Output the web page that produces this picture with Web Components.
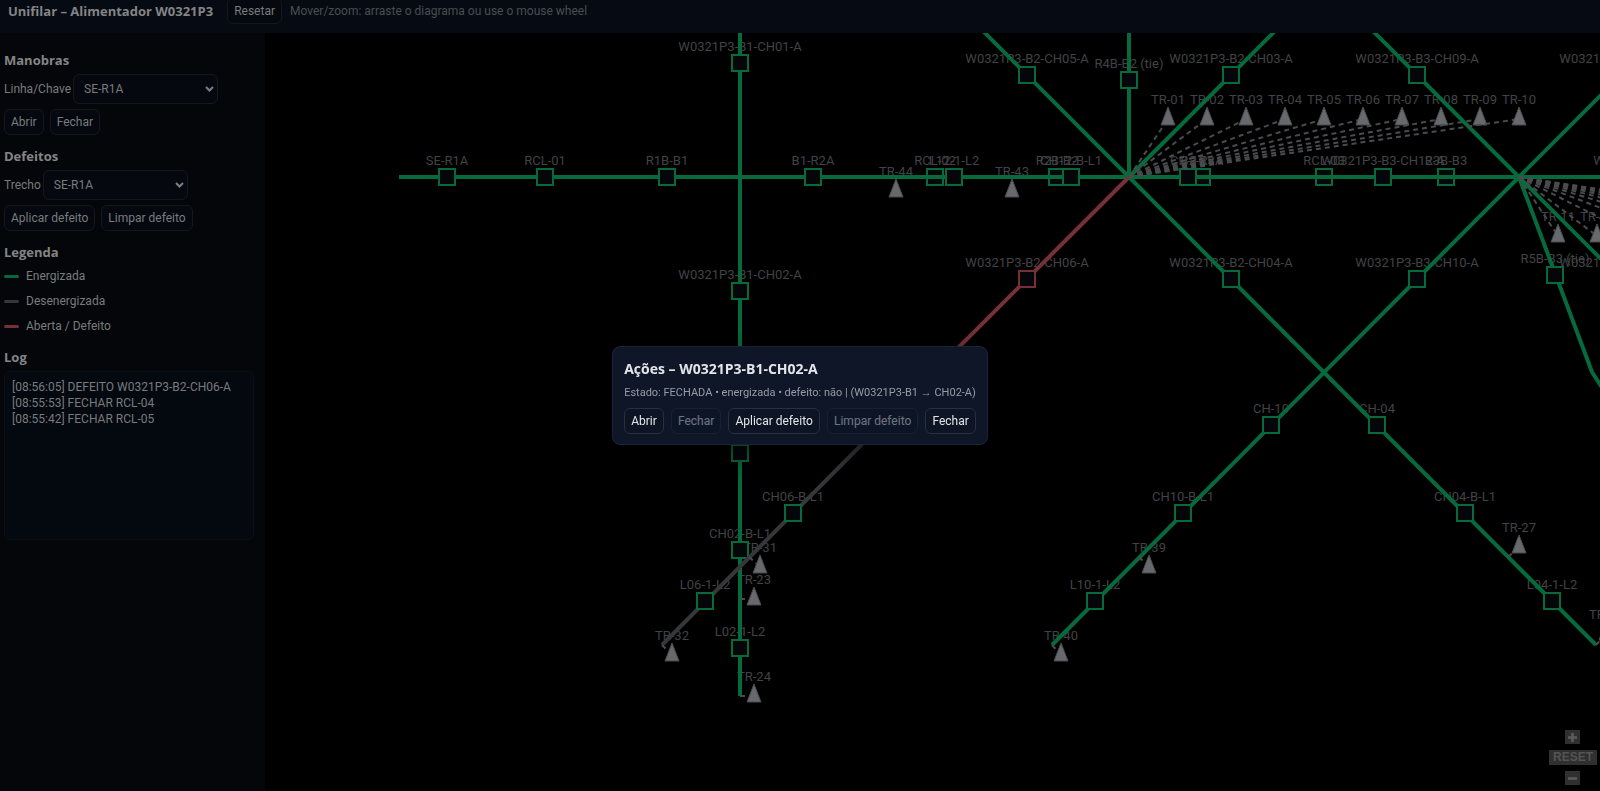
<!DOCTYPE html>
<html lang="pt-BR">
<head>
<meta charset="utf-8">
<title>Unifilar – Alimentador W0321P3</title>
<style>
  html, body { height: 100%; margin: 0; overflow: hidden; background: #000; }
  body { font: 12px/16px Roboto, "Noto Sans", sans-serif; color: #797b7d; }
</style>
</head>
<body>
<unifilar-app></unifilar-app>
<script>
const define = (name, html, setup) => customElements.define(name, class extends HTMLElement {
  constructor() {
    super();
    this.attachShadow({ mode: 'open' }).innerHTML = html;
  }
  connectedCallback() { if (setup) setup(this, this.shadowRoot); }
});

define('ui-button', `
  <style>
    :host { display: inline-flex; }
    button { font: inherit; height: 26px; padding: 0 6px; border: 1px solid var(--btn-border, #14171c); border-radius: 6px;
      background: var(--btn-bg, #05080f); color: var(--btn-color, #797b7d); white-space: nowrap; }
    button:disabled { opacity: .45; }
  </style>
  <button type="button"><slot></slot></button>`, (host, root) => {
    root.querySelector('button').disabled = host.hasAttribute('disabled');
  });

define('labeled-select', `
  <style>
    :host { display: block; }
    label { display: flex; align-items: center; gap: 2px; }
    .box { position: relative; display: flex; }
    select { appearance: none; font: inherit; width: 145px; height: 30px; padding: 0 10px; border: 1px solid #14171c;
      border-radius: 6px; background: #05080f; color: #797b7d; }
    svg { position: absolute; right: 4px; top: 11px; pointer-events: none; }
  </style>
  <label><span></span>
    <div class="box"><select></select>
      <svg width="9" height="8" viewBox="0 0 9 8"><path d="M1 2l3.500 3.500L8 2" fill="none" stroke="#7d7f80" stroke-width="2"/></svg>
    </div>
  </label>`, (host, root) => {
    root.querySelector('span').textContent = host.getAttribute('label');
    root.querySelector('select').innerHTML = '<option>SE-R1A</option><option>RCL-01</option><option>R1B-B1</option>';
  });

define('side-section', `
  <style>
    :host { display: flex; flex-direction: column; }
    h3 { margin: 0 0 5px; font: 700 13px/18px "Open Sans", sans-serif; color: #848586; }
    .body { display: flex; flex-direction: column; gap: 5px; }
  </style>
  <h3></h3><div class="body"><slot></slot></div>`, (host, root) => {
    root.querySelector('h3').textContent = host.getAttribute('heading');
  });

define('legend-item', `
  <style>
    :host { display: flex; align-items: center; gap: 7px; height: 20px; }
    i { width: 15px; height: 3px; border-radius: 2px; background: var(--swatch); }
  </style>
  <i></i><span><slot></slot></span>`);

define('event-log', `
  <style>
    :host { display: block; box-sizing: border-box; height: 169px; padding: 7px; border: 1px solid #0b0f16;
      border-radius: 6px; background: #04080f; }
  </style><slot></slot>`);

define('app-header', `
  <style>
    :host { display: flex; align-items: center; gap: 8px; margin-top: -12px; padding: 10px 8px 9px;
      background: #060a12; }
    h1 { margin: 0 6px 0 0; font: 700 13px/18px "Open Sans", sans-serif; color: #848586; }
    span { color: #4a4d52; }
  </style>
  <h1>Unifilar – Alimentador W0321P3</h1>
  <ui-button>Resetar</ui-button>
  <span>Mover/zoom: arraste o diagrama ou use o mouse wheel</span>`);

define('side-panel', `
  <style>
    :host { display: flex; flex-direction: column; gap: 12px; box-sizing: border-box; padding: 18px 11px 0 4px;
      background: #040609; }
    .row { display: flex; gap: 6px; }
    .log-line { height: 16px; }
    .legend { display: flex; flex-direction: column; gap: 5px; }
  </style>
  <side-section heading="Manobras">
    <labeled-select label="Linha/Chave"></labeled-select>
    <div class="row"><ui-button>Abrir</ui-button><ui-button>Fechar</ui-button></div>
  </side-section>
  <side-section heading="Defeitos">
    <labeled-select label="Trecho"></labeled-select>
    <div class="row"><ui-button>Aplicar defeito</ui-button><ui-button>Limpar defeito</ui-button></div>
  </side-section>
  <side-section heading="Legenda">
    <div class="legend">
      <legend-item style="--swatch:#07693b">Energizada</legend-item>
      <legend-item style="--swatch:#35373b">Desenergizada</legend-item>
      <legend-item style="--swatch:#77303a">Aberta / Defeito</legend-item>
    </div>
  </side-section>
  <side-section heading="Log">
    <event-log>
      <div class="log-line">[08:56:05] DEFEITO W0321P3-B2-CH06-A</div>
      <div class="log-line">[08:55:53] FECHAR RCL-04</div>
      <div class="log-line">[08:55:42] FECHAR RCL-05</div>
    </event-log>
  </side-section>`);

define('zoom-controls', `
  <style>
    :host { display: flex; flex-direction: column; align-items: center; gap: 6px; }
    button { display: grid; place-items: center; height: 15px; min-width: 15px; padding: 0 4px; border: 0;
      background: #303030; color: #545454; font: bold 12px/15px "Liberation Sans", Arial, sans-serif; }
    .icon { padding: 0; height: 14px; }
  </style>
  <button class="icon" aria-label="Ampliar"><svg width="11" height="11" viewBox="0 0 11 11"><path d="M5.500 1v9M1 5.500h9" stroke="#5c5c5c" stroke-width="2.500"/></svg></button>
  <button>RESET</button>
  <button class="icon" aria-label="Reduzir"><svg width="11" height="11" viewBox="0 0 11 11"><path d="M1 5.500h9" stroke="#5c5c5c" stroke-width="2.500"/></svg></button>`);

/* Diagram data: each feeder is a polyline with its switches, in canvas coordinates. */
const GREEN = '#076a3d', GREY = '#35373b', RED = '#77303a';
const BUS_Y = 144, B1 = 475, B2 = 864, B3 = 1254;
const lines = [
  { pts: [[134, BUS_Y], [1500, BUS_Y]], sw: [['SE-R1A', 182, BUS_Y], ['RCL-01', 280, BUS_Y], ['R1B-B1', 402, BUS_Y],
    ['B1-R2A', 548, BUS_Y], ['RCL-02', 670, BUS_Y], ['R2B-B2', 792, BUS_Y], ['B2-R3A', 937, BUS_Y], ['RCL-03', 1059, BUS_Y],
    ['R3B-B3', 1181, BUS_Y], ['W0321P3-B3-CH11-A', 1390, BUS_Y]] },
  { pts: [[B3, BUS_Y], [616, BUS_Y]], sw: [['W0321P3-B3-CH12-A', 1118, BUS_Y], ['CH-12', 923, BUS_Y], ['CH12-B-L1', 806, BUS_Y], ['L12-1-L2', 689, BUS_Y]] },
  { pts: [[B1, -20], [B1, 663]], sw: [['W0321P3-B1-CH01-A', B1, 30], ['W0321P3-B1-CH02-A', B1, 258], ['CH-02', B1, 420],
    ['CH02-B-L1', B1, 517], ['L02-1-L2', B1, 615]] },
  { pts: [[B2, BUS_Y], [B2, -20]], sw: [['R4B-B2 (tie)', B2, 47]] },
  { pts: [[B2, BUS_Y], [694, -26]], sw: [['W0321P3-B2-CH05-A', 762, 42]] },
  { pts: [[B2, BUS_Y], [1034, -26]], sw: [['W0321P3-B2-CH03-A', 966, 42]] },
  { pts: [[660, 348], [397, 612]], color: GREY, sw: [['CH06-B-L1', 528, 480], ['L06-1-L2', 440, 568]], swColor: GREEN },
  { pts: [[B2, BUS_Y], [660, 348]], color: RED, sw: [['W0321P3-B2-CH06-A', 762, 246]] },
  { pts: [[B2, BUS_Y], [1331, 612]], sw: [['W0321P3-B2-CH04-A', 966, 246], ['CH-04', 1112, 392], ['CH04-B-L1', 1200, 480], ['L04-1-L2', 1287, 568]] },
  { pts: [[B3, BUS_Y], [1084, -26]], sw: [['W0321P3-B3-CH09-A', 1152, 42]] },
  { pts: [[B3, BUS_Y], [1424, -26]], sw: [['W0321P3-B3-CH07-A', 1356, 42]] },
  { pts: [[B3, BUS_Y], [787, 612]], sw: [['W0321P3-B3-CH10-A', 1152, 246], ['CH-10', 1006, 392], ['CH10-B-L1', 918, 480], ['L10-1-L2', 830, 568]] },
  { pts: [[B3, BUS_Y], [1424, 314]], sw: [['W0321P3-B3-CH08-A', 1356, 246]] },
  { pts: [[B3, BUS_Y], [1327, 339], [1360, 390]], sw: [['R5B-B3 (tie)', 1290, 242]] }
];
const trafos = [];
for (let i = 0; i < 10; i++) {
  trafos.push(['TR-' + String(i + 1).padStart(2, '0'), 903 + i * 39, 86, B2, BUS_Y]);
  trafos.push(['TR-' + (i + 11), 1293 + i * 39, 203, B3, BUS_Y]);
}
trafos.push(['TR-44', 631, 158, 631, 158], ['TR-43', 747, 158, 747, 158],
  ['TR-31', 495, 534, 484, 524], ['TR-32', 407, 622, 397, 612], ['TR-23', 489, 566, 475, 566], ['TR-24', 489, 663, 475, 663],
  ['TR-39', 884, 534, 874, 524], ['TR-40', 796, 622, 787, 612], ['TR-27', 1254, 514, 1243, 524], ['TR-28', 1341, 601, 1331, 612]);

define('line-diagram', `
  <style>
    :host { display: block; overflow: hidden; background: #000; }
    svg { display: block; width: 100%; height: 100%; }
    text { font-size: 13px; text-anchor: middle; fill: #414346; }
    polyline { fill: none; stroke-width: 4; }
    rect { stroke-width: 2; }
    .drop { stroke: #4a4b4f; stroke-width: 2; stroke-dasharray: 5 4; }
    .tr { fill: #68696c; stroke: #4a4b4f; stroke-width: 1; }
  </style>
  <svg role="img" aria-label="Diagrama unifilar"></svg>`, (host, root) => {
    let labels = '', shapes = '';
    for (const l of lines) {
      const color = l.color || GREEN;
      shapes += `<polyline points="${l.pts.join(' ')}" stroke="${color}"/>`;
      for (const [name, x, y] of l.sw) {
        labels += `<text x="${x}" y="${y - 12}">${name}</text>`;
        shapes += `<rect x="${x - 8}" y="${y - 8}" width="16" height="16" fill="#04060a" stroke="${l.swColor || color}"/>`;
      }
    }
    for (const [name, x, y, px, py] of trafos) {
      labels += `<text x="${x}" y="${y - 15}">${name}</text>`;
      shapes += `<line class="drop" x1="${px}" y1="${py}" x2="${x}" y2="${y}"/>` +
        `<path class="tr" d="M${x} ${y - 12}l7 18h-14z"/>`;
    }
    /* The bus stays visible through the switches that share it with feeder CH12. */
    root.querySelector('svg').innerHTML = labels + shapes;
  });

define('action-dialog', `
  <style>
    :host { display: contents; }
    dialog { position: fixed; inset: 0; margin: auto; box-sizing: border-box; width: max-content; height: max-content;
      padding: 11px 11px 10px; border: 1px solid #1b2436; border-radius: 8px; background: #0e1628; color: #e3e5e9;
      box-shadow: 0 10px 30px rgba(0, 0, 0, .5); }
    h2 { margin: 0; font: 700 14px/22px "Open Sans", sans-serif; }
    p { margin: 4px 0 6px; font-size: 11px; line-height: 18px; color: #989ca6; }
    .row { display: flex; justify-content: space-between; gap: 6px; --btn-bg: #0d1524; --btn-border: #273040; --btn-color: #e3e5e9; }
  </style>
  <dialog open aria-labelledby="t">
    <h2 id="t">Ações – W0321P3-B1-CH02-A</h2>
    <p>Estado: FECHADA • energizada • defeito: não | (W0321P3-B1 → CH02-A)</p>
    <div class="row">
      <ui-button>Abrir</ui-button><ui-button disabled>Fechar</ui-button><ui-button>Aplicar defeito</ui-button>
      <ui-button disabled>Limpar defeito</ui-button><ui-button>Fechar</ui-button>
    </div>
  </dialog>`);

define('unifilar-app', `
  <style>
    :host { display: flex; flex-direction: column; height: 100vh; overflow: hidden; }
    app-header { flex: none; }
    .main { flex: 1; min-height: 0; display: grid; grid-template-columns: 265px 1fr; }
    .canvas { position: relative; min-width: 0; display: grid; overflow: hidden; }
    zoom-controls { position: absolute; right: 3px; bottom: 6px; }
  </style>
  <app-header></app-header>
  <div class="main">
    <side-panel></side-panel>
    <div class="canvas"><line-diagram></line-diagram><zoom-controls></zoom-controls></div>
  </div>
  <action-dialog></action-dialog>`);
</script>
</body>
</html>
